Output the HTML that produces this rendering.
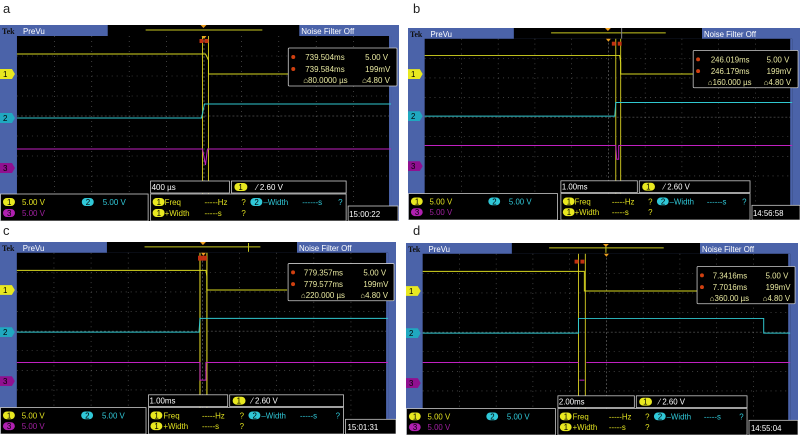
<!DOCTYPE html>
<html><head><meta charset="utf-8"><style>
html,body{margin:0;padding:0;background:#fff;width:800px;height:442px;overflow:hidden;position:relative;font-family:"Liberation Sans",sans-serif}
.lbl{position:absolute;font-size:13px;color:#222}
svg{position:absolute}
svg text{font-family:"Liberation Sans",sans-serif;font-size:8px}
</style></head><body>
<div class="lbl" style="left:3px;top:1px">a</div>
<div class="lbl" style="left:413px;top:1px">b</div>
<div class="lbl" style="left:3px;top:223px">c</div>
<div class="lbl" style="left:413px;top:223px">d</div>

<!-- panel a -->
<svg style="left:0;top:25px" width="399" height="196" viewBox="0 0 400 196" preserveAspectRatio="none">
<rect width="400" height="196" fill="#4b63a9"/>
<text x="2" y="9" font-family="Liberation Serif" font-weight="bold" font-size="10" fill="#111" style="font-family:'Liberation Serif'">Tek</text>
<text x="23" y="9" fill="#fff">PreVu</text>
<rect x="108" y="0" width="192" height="11" fill="#000"/>
<line x1="146" x2="263" y1="5" y2="5" stroke="#c8c820"/>
<polygon points="201,0 207,0 204,3" fill="#f0a020"/>
<text x="302" y="9" fill="#fff">Noise Filter Off</text>
<rect x="17" y="11" width="375" height="185" fill="#000"/>
<g stroke="#666" stroke-width="0.6" stroke-dasharray="1 4">
<path d="M54.5 11V196M92 11V196M129.5 11V196M167 11V196M242 11V196M279.5 11V196M317 11V196M354.5 11V196M17 31H392M17 51H392M17 71H392M17 111H392M17 131H392M17 151H392"/>
</g>
<path d="M204.5 11V196M17 91H392" stroke="#777" stroke-width="0.6" stroke-dasharray="2 2"/>
<rect x="390" y="11" width="2" height="185" fill="#4b63a9"/>
<polygon points="202,11 207,11 204.5,14" fill="#f0a020"/>
<path d="M203 11V170M209 11V170" stroke="#c8c020" stroke-width="1"/>
<rect x="200" y="14" width="4" height="4" fill="#c03010"/><rect x="205" y="14" width="4" height="4" fill="#c03010"/>
<path d="M17 29H206L209 35V49H290" stroke="#d8d820" stroke-width="1" fill="none"/>
<path d="M17 93H202L205 79H392" stroke="#30c8d0" stroke-width="1" fill="none"/>
<path d="M17 124H203L206 140L208 124H392" stroke="#c020c0" stroke-width="1" fill="none"/>
<rect x="289" y="23" width="109" height="38" fill="#000" stroke="#ccc" stroke-width="0.8" rx="1"/>
<g fill="#e8e8a0"><circle cx="294" cy="32" r="2" fill="#d04010"/><circle cx="294" cy="44" r="2" fill="#d04010"/>
<text x="306" y="35">739.504ms</text><text x="366" y="35">5.00 V</text>
<text x="306" y="47">739.584ms</text><text x="366" y="47">199mV</text>
<text x="304" y="58">⌂80.0000 µs</text><text x="363" y="58">⌂4.80 V</text></g>
<polygon points="0,44 12,44 15,49 12,54 0,54" fill="#e8e820"/><text x="3" y="52" fill="#000">1</text>
<polygon points="0,88 12,88 15,93 12,98 0,98" fill="#20a8c0"/><text x="3" y="96" fill="#000">2</text>
<polygon points="0,138 12,138 15,143 12,148 0,148" fill="#901090"/><text x="3" y="146" fill="#000">3</text>
<rect x="151" y="156" width="79" height="12" fill="#000" stroke="#ccc" stroke-width="0.8"/>
<text x="152" y="165" fill="#fff">400 µs</text>
<rect x="232" y="156" width="115" height="12" fill="#000" stroke="#ccc" stroke-width="0.8"/>
<rect x="235" y="158" width="13" height="8" rx="4" fill="#e8e820"/><text x="239" y="165" fill="#000">1</text>
<text x="257" y="165" fill="#fff">⁄ 2.60 V</text>
<rect x="0.5" y="169" width="148" height="27" fill="#000" stroke="#ccc" stroke-width="0.8"/>
<rect x="3" y="173" width="12" height="8" rx="4" fill="#e8e820"/><text x="7" y="180" fill="#000">1</text>
<text x="22" y="180" fill="#e0e020">5.00 V</text>
<rect x="82" y="173" width="12" height="8" rx="4" fill="#30c8d8"/><text x="86" y="180" fill="#000">2</text>
<text x="103" y="180" fill="#30c8d8">5.00 V</text>
<rect x="3" y="184" width="12" height="8" rx="4" fill="#b020b0"/><text x="7" y="191" fill="#000">3</text>
<text x="22" y="191" fill="#a020a0">5.00 V</text>
<rect x="151" y="169" width="196" height="27" fill="#000" stroke="#ccc" stroke-width="0.8"/>
<rect x="153" y="173" width="12" height="8" rx="4" fill="#e8e820"/><text x="157" y="180" fill="#000">1</text>
<text x="165" y="180" fill="#e0e020">Freq</text><text x="205" y="180" fill="#e0e020">-----Hz</text><text x="242" y="180" fill="#e0e020">?</text>
<rect x="251" y="173" width="12" height="8" rx="4" fill="#30c8d8"/><text x="255" y="180" fill="#000">2</text>
<text x="264" y="180" fill="#30c8d8">–Width</text><text x="303" y="180" fill="#30c8d8">------s</text><text x="339" y="180" fill="#30c8d8">?</text>
<rect x="153" y="184" width="12" height="8" rx="4" fill="#e8e820"/><text x="157" y="191" fill="#000">1</text>
<text x="165" y="191" fill="#e0e020">+Width</text><text x="205" y="191" fill="#e0e020">-----s</text><text x="242" y="191" fill="#e0e020">?</text>
<rect x="349" y="181" width="50" height="15" fill="#000" stroke="#ccc" stroke-width="0.8"/>
<text x="350" y="192" fill="#fff">15:00:22</text>
</svg>

<!-- panel b -->
<svg style="left:408px;top:28px" width="392" height="192" viewBox="0 0 400 196" preserveAspectRatio="none">
<rect width="400" height="196" fill="#4b63a9"/>
<text x="2" y="9" font-weight="bold" font-size="10" fill="#111" style="font-family:'Liberation Serif'">Tek</text>
<text x="23" y="9" fill="#fff">PreVu</text>
<rect x="108" y="0" width="192" height="11" fill="#000"/>
<line x1="146" x2="263" y1="5" y2="5" stroke="#c8c820"/>
<polygon points="201,0 207,0 204,3" fill="#f0a020"/><line x1="218" x2="218" y1="0" y2="11" stroke="#888"/>
<text x="302" y="9" fill="#fff">Noise Filter Off</text>
<rect x="17" y="11" width="375" height="185" fill="#000"/>
<g stroke="#666" stroke-width="0.6" stroke-dasharray="1 4">
<path d="M54.5 11V196M92 11V196M129.5 11V196M167 11V196M242 11V196M279.5 11V196M317 11V196M354.5 11V196M17 31H392M17 51H392M17 71H392M17 111H392M17 131H392M17 151H392"/>
</g>
<path d="M204.5 11V196M17 91H392" stroke="#777" stroke-width="0.6" stroke-dasharray="2 2"/>
<rect x="390" y="11" width="2" height="185" fill="#4b63a9"/>
<polygon points="202,11 207,11 204.5,14" fill="#f0a020"/>
<path d="M212 11V170M217 11V170" stroke="#c8c020" stroke-width="1"/>
<rect x="208" y="14" width="4" height="4" fill="#c03010"/><rect x="214" y="14" width="4" height="4" fill="#c03010"/>
<path d="M17 28H216L217 35V47H292" stroke="#d8d820" stroke-width="1" fill="none"/>
<path d="M17 90H211L212 76H392" stroke="#30c8d0" stroke-width="1" fill="none"/>
<path d="M17 120H212L213 134L215 134L215 120H392" stroke="#c020c0" stroke-width="1" fill="none"/>
<rect x="291" y="23" width="107" height="38" fill="#000" stroke="#ccc" stroke-width="0.8" rx="1"/>
<g fill="#e8e8a0"><circle cx="296" cy="32" r="2" fill="#d04010"/><circle cx="296" cy="44" r="2" fill="#d04010"/>
<text x="309" y="35">246.019ms</text><text x="366" y="35">5.00 V</text>
<text x="309" y="47">246.179ms</text><text x="366" y="47">199mV</text>
<text x="306" y="58">⌂160.000 µs</text><text x="363" y="58">⌂4.80 V</text></g>
<polygon points="0,42 12,42 15,47 12,52 0,52" fill="#e8e820"/><text x="3" y="50" fill="#000">1</text>
<polygon points="0,85 12,85 15,90 12,95 0,95" fill="#20a8c0"/><text x="3" y="93" fill="#000">2</text>
<polygon points="0,136 12,136 15,141 12,146 0,146" fill="#901090"/><text x="3" y="144" fill="#000">3</text>
<rect x="156" y="156" width="78" height="12" fill="#000" stroke="#ccc" stroke-width="0.8"/>
<text x="157" y="165" fill="#fff">1.00ms</text>
<rect x="236" y="156" width="113" height="12" fill="#000" stroke="#ccc" stroke-width="0.8"/>
<rect x="239" y="158" width="13" height="8" rx="4" fill="#e8e820"/><text x="243" y="165" fill="#000">1</text>
<text x="261" y="165" fill="#fff">⁄ 2.60 V</text>
<rect x="0.5" y="169" width="152" height="27" fill="#000" stroke="#ccc" stroke-width="0.8"/>
<rect x="3" y="173" width="12" height="8" rx="4" fill="#e8e820"/><text x="7" y="180" fill="#000">1</text>
<text x="22" y="180" fill="#e0e020">5.00 V</text>
<rect x="82" y="173" width="12" height="8" rx="4" fill="#30c8d8"/><text x="86" y="180" fill="#000">2</text>
<text x="103" y="180" fill="#30c8d8">5.00 V</text>
<rect x="3" y="184" width="12" height="8" rx="4" fill="#b020b0"/><text x="7" y="191" fill="#000">3</text>
<text x="22" y="191" fill="#a020a0">5.00 V</text>
<rect x="156" y="169" width="193" height="27" fill="#000" stroke="#ccc" stroke-width="0.8"/>
<rect x="158" y="173" width="12" height="8" rx="4" fill="#e8e820"/><text x="162" y="180" fill="#000">1</text>
<text x="170" y="180" fill="#e0e020">Freq</text><text x="208" y="180" fill="#e0e020">-----Hz</text><text x="245" y="180" fill="#e0e020">?</text>
<rect x="254" y="173" width="12" height="8" rx="4" fill="#30c8d8"/><text x="258" y="180" fill="#000">2</text>
<text x="267" y="180" fill="#30c8d8">–Width</text><text x="305" y="180" fill="#30c8d8">------s</text><text x="341" y="180" fill="#30c8d8">?</text>
<rect x="158" y="184" width="12" height="8" rx="4" fill="#e8e820"/><text x="162" y="191" fill="#000">1</text>
<text x="170" y="191" fill="#e0e020">+Width</text><text x="208" y="191" fill="#e0e020">-----s</text><text x="245" y="191" fill="#e0e020">?</text>
<rect x="351" y="181" width="49" height="15" fill="#000" stroke="#ccc" stroke-width="0.8"/>
<text x="352" y="192" fill="#fff">14:56:58</text>
</svg>

<!-- panel c -->
<svg style="left:0;top:242px" width="396" height="192" viewBox="0 0 400 196" preserveAspectRatio="none">
<rect width="400" height="196" fill="#4b63a9"/>
<text x="2" y="9" font-weight="bold" font-size="10" fill="#111" style="font-family:'Liberation Serif'">Tek</text>
<text x="23" y="9" fill="#fff">PreVu</text>
<rect x="108" y="0" width="192" height="11" fill="#000"/>
<line x1="146" x2="263" y1="5" y2="5" stroke="#c8c820"/>
<polygon points="202,0 208,0 205,3" fill="#f0a020"/><line x1="251" x2="251" y1="1" y2="10" stroke="#c8c820"/>
<text x="302" y="9" fill="#fff">Noise Filter Off</text>
<rect x="17" y="11" width="375" height="185" fill="#000"/>
<g stroke="#666" stroke-width="0.6" stroke-dasharray="1 4">
<path d="M54.5 11V196M92 11V196M129.5 11V196M167 11V196M242 11V196M279.5 11V196M317 11V196M354.5 11V196M17 31H392M17 51H392M17 71H392M17 111H392M17 131H392M17 151H392"/>
</g>
<path d="M204.5 11V196M17 91H392" stroke="#777" stroke-width="0.6" stroke-dasharray="2 2"/>
<rect x="390" y="11" width="2" height="185" fill="#4b63a9"/>
<polygon points="203,11 208,11 205.5,14" fill="#f0a020"/>
<path d="M202 11V170M209 11V170" stroke="#c8c020" stroke-width="1.2"/>
<rect x="200" y="14" width="9" height="5" fill="#c03010"/>
<path d="M17 29H208L209 35V49H290" stroke="#d8d820" stroke-width="1" fill="none"/>
<path d="M17 92H201L202 78H392" stroke="#30c8d0" stroke-width="1" fill="none"/>
<path d="M17 123H202V141H208V123H392" stroke="#c020c0" stroke-width="1" fill="none"/>
<rect x="291" y="22" width="107" height="38" fill="#000" stroke="#ccc" stroke-width="0.8" rx="1"/>
<g fill="#e8e8a0"><circle cx="296" cy="31" r="2" fill="#d04010"/><circle cx="296" cy="43" r="2" fill="#d04010"/>
<text x="307" y="34">779.357ms</text><text x="367" y="34">5.00 V</text>
<text x="307" y="46">779.577ms</text><text x="367" y="46">199mV</text>
<text x="304" y="57">⌂220.000 µs</text><text x="364" y="57">⌂4.80 V</text></g>
<polygon points="0,44 12,44 15,49 12,54 0,54" fill="#e8e820"/><text x="3" y="52" fill="#000">1</text>
<polygon points="0,87 12,87 15,92 12,97 0,97" fill="#20a8c0"/><text x="3" y="95" fill="#000">2</text>
<polygon points="0,137 12,137 15,142 12,147 0,147" fill="#901090"/><text x="3" y="145" fill="#000">3</text>
<rect x="150" y="156" width="80" height="12" fill="#000" stroke="#ccc" stroke-width="0.8"/>
<text x="151" y="165" fill="#fff">1.00ms</text>
<rect x="232" y="156" width="115" height="12" fill="#000" stroke="#ccc" stroke-width="0.8"/>
<rect x="235" y="158" width="13" height="8" rx="4" fill="#e8e820"/><text x="239" y="165" fill="#000">1</text>
<text x="254" y="165" fill="#fff">⁄ 2.60 V</text>
<rect x="0.5" y="169" width="147" height="27" fill="#000" stroke="#ccc" stroke-width="0.8"/>
<rect x="3" y="173" width="12" height="8" rx="4" fill="#e8e820"/><text x="7" y="180" fill="#000">1</text>
<text x="22" y="180" fill="#e0e020">5.00 V</text>
<rect x="82" y="173" width="12" height="8" rx="4" fill="#30c8d8"/><text x="86" y="180" fill="#000">2</text>
<text x="103" y="180" fill="#30c8d8">5.00 V</text>
<rect x="3" y="184" width="12" height="8" rx="4" fill="#b020b0"/><text x="7" y="191" fill="#000">3</text>
<text x="22" y="191" fill="#a020a0">5.00 V</text>
<rect x="150" y="169" width="197" height="27" fill="#000" stroke="#ccc" stroke-width="0.8"/>
<rect x="152" y="173" width="12" height="8" rx="4" fill="#e8e820"/><text x="156" y="180" fill="#000">1</text>
<text x="165" y="180" fill="#e0e020">Freq</text><text x="204" y="180" fill="#e0e020">-----Hz</text><text x="242" y="180" fill="#e0e020">?</text>
<rect x="251" y="173" width="12" height="8" rx="4" fill="#30c8d8"/><text x="255" y="180" fill="#000">2</text>
<text x="264" y="180" fill="#30c8d8">–Width</text><text x="303" y="180" fill="#30c8d8">-----s</text><text x="339" y="180" fill="#30c8d8">?</text>
<rect x="152" y="184" width="12" height="8" rx="4" fill="#e8e820"/><text x="156" y="191" fill="#000">1</text>
<text x="165" y="191" fill="#e0e020">+Width</text><text x="204" y="191" fill="#e0e020">-----s</text><text x="242" y="191" fill="#e0e020">?</text>
<rect x="349" y="181" width="51" height="15" fill="#000" stroke="#ccc" stroke-width="0.8"/>
<text x="351" y="192" fill="#fff">15:01:31</text>
</svg>

<!-- panel d -->
<svg style="left:406px;top:243px" width="392" height="192" viewBox="0 0 400 196" preserveAspectRatio="none">
<rect width="400" height="196" fill="#4b63a9"/>
<text x="2" y="9" font-weight="bold" font-size="10" fill="#111" style="font-family:'Liberation Serif'">Tek</text>
<text x="23" y="9" fill="#fff">PreVu</text>
<rect x="108" y="0" width="192" height="11" fill="#000"/>
<line x1="146" x2="263" y1="5" y2="5" stroke="#c8c820"/>
<line x1="204" x2="204" y1="1" y2="10" stroke="#c8c820"/><polygon points="201,1 207,1 204,4" fill="#f0a020"/>
<text x="302" y="9" fill="#fff">Noise Filter Off</text>
<rect x="17" y="11" width="375" height="185" fill="#000"/>
<g stroke="#666" stroke-width="0.6" stroke-dasharray="1 4">
<path d="M54.5 11V196M92 11V196M129.5 11V196M167 11V196M242 11V196M279.5 11V196M317 11V196M354.5 11V196M17 31H392M17 51H392M17 71H392M17 111H392M17 131H392M17 151H392"/>
</g>
<path d="M204.5 11V196M17 91H392" stroke="#777" stroke-width="0.6" stroke-dasharray="2 2"/>
<rect x="390" y="11" width="2" height="185" fill="#4b63a9"/>
<polygon points="202,11 207,11 204.5,14" fill="#f0a020"/>
<path d="M176 11V170M183 11V170" stroke="#c8c020" stroke-width="1"/>
<rect x="172" y="17" width="4" height="4" fill="#c03010"/><rect x="178" y="17" width="4" height="4" fill="#c03010"/>
<path d="M17 29H182V49H298" stroke="#d8d820" stroke-width="1" fill="none"/>
<path d="M17 92H176V77H365V92H392" stroke="#30c8d0" stroke-width="1" fill="none"/>
<path d="M17 122H176M184 122H392" stroke="#c020c0" stroke-width="1" fill="none"/>
<path d="M177 140H182" stroke="#c020c0" stroke-width="1"/>
<rect x="297" y="24" width="100" height="38" fill="#000" stroke="#ccc" stroke-width="0.8" rx="1"/>
<g fill="#e8e8a0"><circle cx="302" cy="33" r="2" fill="#d04010"/><circle cx="302" cy="45" r="2" fill="#d04010"/>
<text x="313" y="36">7.3416ms</text><text x="367" y="36">5.00 V</text>
<text x="313" y="48">7.7016ms</text><text x="367" y="48">199mV</text>
<text x="310" y="59">⌂360.00 µs</text><text x="364" y="59">⌂4.80 V</text></g>
<polygon points="0,44 12,44 15,49 12,54 0,54" fill="#e8e820"/><text x="3" y="52" fill="#000">1</text>
<polygon points="0,87 12,87 15,92 12,97 0,97" fill="#20a8c0"/><text x="3" y="95" fill="#000">2</text>
<polygon points="0,138 12,138 15,143 12,148 0,148" fill="#901090"/><text x="3" y="146" fill="#000">3</text>
<rect x="155" y="156" width="78" height="12" fill="#000" stroke="#ccc" stroke-width="0.8"/>
<text x="156" y="165" fill="#fff">2.00ms</text>
<rect x="235" y="156" width="113" height="12" fill="#000" stroke="#ccc" stroke-width="0.8"/>
<rect x="238" y="158" width="13" height="8" rx="4" fill="#e8e820"/><text x="242" y="165" fill="#000">1</text>
<text x="258" y="165" fill="#fff">⁄ 2.60 V</text>
<rect x="0.5" y="169" width="152" height="27" fill="#000" stroke="#ccc" stroke-width="0.8"/>
<rect x="3" y="173" width="12" height="8" rx="4" fill="#e8e820"/><text x="7" y="180" fill="#000">1</text>
<text x="22" y="180" fill="#e0e020">5.00 V</text>
<rect x="82" y="173" width="12" height="8" rx="4" fill="#30c8d8"/><text x="86" y="180" fill="#000">2</text>
<text x="103" y="180" fill="#30c8d8">5.00 V</text>
<rect x="3" y="184" width="12" height="8" rx="4" fill="#b020b0"/><text x="7" y="191" fill="#000">3</text>
<text x="22" y="191" fill="#a020a0">5.00 V</text>
<rect x="155" y="169" width="193" height="27" fill="#000" stroke="#ccc" stroke-width="0.8"/>
<rect x="157" y="173" width="12" height="8" rx="4" fill="#e8e820"/><text x="161" y="180" fill="#000">1</text>
<text x="170" y="180" fill="#e0e020">Freq</text><text x="207" y="180" fill="#e0e020">-----Hz</text><text x="244" y="180" fill="#e0e020">?</text>
<rect x="253" y="173" width="12" height="8" rx="4" fill="#30c8d8"/><text x="257" y="180" fill="#000">2</text>
<text x="266" y="180" fill="#30c8d8">–Width</text><text x="304" y="180" fill="#30c8d8">-----s</text><text x="340" y="180" fill="#30c8d8">?</text>
<rect x="157" y="184" width="12" height="8" rx="4" fill="#e8e820"/><text x="161" y="191" fill="#000">1</text>
<text x="170" y="191" fill="#e0e020">+Width</text><text x="207" y="191" fill="#e0e020">-----s</text><text x="244" y="191" fill="#e0e020">?</text>
<rect x="350" y="181" width="50" height="15" fill="#000" stroke="#ccc" stroke-width="0.8"/>
<text x="352" y="192" fill="#fff">14:55:04</text>
</svg>
</body></html>
